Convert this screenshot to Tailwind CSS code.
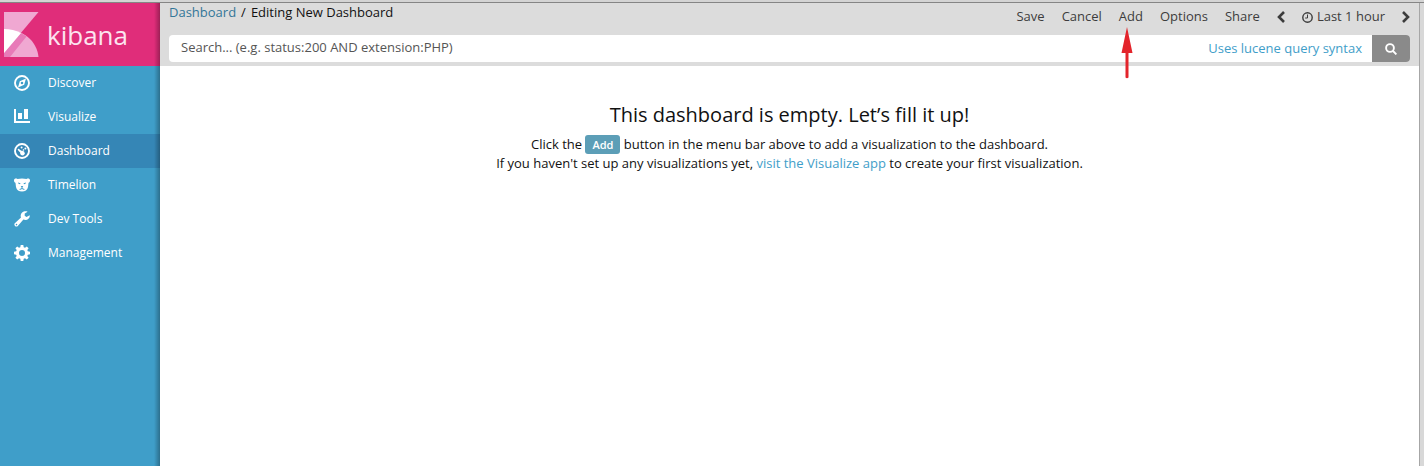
<!DOCTYPE html>
<html lang="en">
<head>
<meta charset="utf-8">
<meta name="viewport" content="width=device-width, initial-scale=1">
<title>Kibana - Editing New Dashboard</title>
<script src="https://cdn.jsdelivr.net/npm/@tailwindcss/browser@4"></script>
</head>
<body class="min-h-screen flex flex-col bg-white font-['Open_Sans',sans-serif] text-[13px] text-[#111]">
<div class="h-[3px] shrink-0 bg-[#d4d4d4] border-b border-[#858585]"></div>
<div class="flex grow">
  <aside class="relative w-[160px] shrink-0 bg-[#3f9ec9] text-xs font-medium text-white">
    <a href="#" aria-label="kibana home" class="flex h-[63px] items-center bg-[#e02d7a] pl-1">
      <svg class="h-[45px] w-[35px] shrink-0" viewBox="0 0 35 45" aria-hidden="true">
        <path fill="#f0a8d2" d="M0 0H34.500L0 41Z"/>
        <path fill="#f0a8d2" d="M0 17C19 17 33 29 34.500 45H0Z"/>
        <path fill="#e87ab8" d="M0 45V41L17 21L22.500 24.500L6 45Z"/>
        <path fill="#fff" d="M0 17C6 17 12 18.500 17 21L0 41Z"/>
      </svg>
      <span class="pl-2 text-[26px] leading-8 text-[#fce4f0]">kibana</span>
    </a>
    <nav aria-label="Main">
      <a href="#" class="flex h-[34px] items-center gap-[18px] pl-3.5">
        <svg class="size-4" viewBox="0 0 16 16" aria-hidden="true"><circle cx="8" cy="8" r="7" fill="none" stroke="#fff" stroke-width="1.900"/><path fill="#fff" fill-rule="evenodd" d="M12 3.500L10.200 9.800L4 12.500L5.800 6.200ZM8 6.700A1.300 1.300 0 1 0 8 9.300A1.300 1.300 0 1 0 8 6.700Z"/></svg>
        <span>Discover</span>
      </a>
      <a href="#" class="flex h-[34px] items-center gap-[18px] pl-3.5">
        <svg class="size-4" viewBox="0 0 16 16" aria-hidden="true"><path fill="#fff" d="M0 0H2V12H16V14H0ZM4 4H8V10H4ZM10 0H14V10H10Z"/></svg>
        <span>Visualize</span>
      </a>
      <a href="#" aria-current="page" class="flex h-[34px] items-center gap-[18px] bg-[#3586b6] pl-3.5">
        <svg class="size-4" viewBox="0 0 16 16" aria-hidden="true"><circle cx="8" cy="8" r="7" fill="none" stroke="#fff" stroke-width="1.900"/><g fill="#fff"><circle cx="4.600" cy="6.600" r=".9"/><circle cx="7.600" cy="4.500" r="1"/><circle cx="11.400" cy="5.600" r="1"/><circle cx="8.500" cy="10.300" r="2.200"/><path d="M4.200 7.500L5.200 6.500L9.500 8.700L8 11.500ZM9.500 6L10.500 7L9 8L8.500 7Z"/></g></svg>
        <span>Dashboard</span>
      </a>
      <a href="#" class="flex h-[34px] items-center gap-[18px] pl-3.5">
        <svg class="size-4" viewBox="0 0 16 16" aria-hidden="true"><path fill="#fff" d="M0 3.500C0 1.500 2 1 3.500 2C6 1.300 10 1.300 12.500 2C14 1 16 1.500 16 3.500C16 5 15 5.500 14.500 6L14 10C13.500 13 11 14.500 8 14.500S2.500 13 2 10L1.500 6C1 5.500 0 5 0 3.500Z"/><g fill="#3f9ec9"><path d="M4 5.500L6.500 6.200L6 7.200L4.500 6.800ZM12 5.500L9.500 6.200L10 7.200L11.500 6.800ZM6.700 9H9.300L8.500 10.300V11.300L10.500 12V12.800H9.500L8 12L6.500 12.800H5.500V12L7.500 11.300V10.300Z"/></g></svg>
        <span>Timelion</span>
      </a>
      <a href="#" class="flex h-[34px] items-center gap-[18px] pl-3.5">
        <svg class="size-4" viewBox="0 0 16 16" aria-hidden="true"><path fill="#fff" fill-rule="evenodd" d="M13.600 .7L10.700 2.500V4.800L12.500 5.900L15.700 4.200C16.300 6.600 14 9 11.500 9C10.700 9 10 8.800 9.400 8.500L3.800 14.900C2.100 16.600-.7 14.100 .8 12.300L7 6.600C5.500 2.800 9.500-.8 13.600 .7ZM2.500 12.800A.8.8 0 1 0 2.500 14.400A.8.8 0 1 0 2.500 12.800Z"/></svg>
        <span>Dev Tools</span>
      </a>
      <a href="#" class="flex h-[34px] items-center gap-[18px] pl-3.5">
        <svg class="size-4" viewBox="0 0 16 16" aria-hidden="true"><path fill="#fff" fill-rule="evenodd" d="M6.700 0H9.300L9.700 2.200L11 2.700L12.800 1.400L14.600 3.200L13.300 5L13.800 6.300L16 6.700V9.300L13.800 9.700L13.300 11L14.600 12.800L12.800 14.600L11 13.300L9.700 13.800L9.300 16H6.700L6.300 13.800L5 13.300L3.200 14.600L1.400 12.800L2.700 11L2.200 9.700L0 9.300V6.700L2.200 6.300L2.700 5L1.400 3.200L3.200 1.400L5 2.700L6.300 2.200ZM8 5A3 3 0 1 0 8 11A3 3 0 1 0 8 5Z"/></svg>
        <span>Management</span>
      </a>
    </nav>
    <div class="pointer-events-none absolute inset-y-0 right-0 w-[6px] bg-linear-to-r from-black/0 to-black/30"></div>
  </aside>
  <div class="flex min-w-0 grow flex-col">
    <header class="bg-[#dcdcdc] pb-1 pl-[9px] pr-[9px]">
      <div class="flex h-8 items-start justify-between">
        <nav aria-label="Breadcrumb" class="flex gap-[5px] leading-[18px]">
          <a href="#" class="text-[#337698]">Dashboard</a><span>/</span><span>Editing New Dashboard</span>
        </nav>
        <div class="flex h-[28px] items-center gap-[17px] text-[#3c3c3c]">
          <button type="button">Save</button>
          <button type="button">Cancel</button>
          <button type="button" class="relative">Add
            <svg class="absolute left-1/2 top-[20px] h-[52px] w-[12px] -translate-x-[10px]" viewBox="0 0 12 52" aria-hidden="true"><path fill="#e3242b" d="M6 0L11.500 26H7.500V50.500Q6 52 4.500 50.500V26H.5Z"/></svg>
          </button>
          <button type="button">Options</button>
          <button type="button">Share</button>
          <button type="button" aria-label="Previous period"><svg class="h-3 w-2" viewBox="0 0 8 12" fill="none" stroke="#3c3c3c" stroke-width="2.600" aria-hidden="true"><path d="M7 1L2 6L7 11"/></svg></button>
          <button type="button" class="flex items-center gap-1">
            <svg class="size-[11px]" viewBox="0 0 11 11" fill="none" stroke="#3c3c3c" aria-hidden="true"><circle cx="5.500" cy="5.500" r="4.700" stroke-width="1.400"/><path d="M5.500 2.500V6H3.200"/></svg>
            <span>Last 1 hour</span></button>
          <button type="button" aria-label="Next period"><svg class="h-3 w-2" viewBox="0 0 8 12" fill="none" stroke="#3c3c3c" stroke-width="2.600" aria-hidden="true"><path d="M1 1L6 6L1 11"/></svg></button>
        </div>
      </div>
      <form class="flex h-[27px] overflow-hidden rounded bg-white">
        <input type="text" aria-label="Search query" placeholder="Search... (e.g. status:200 AND extension:PHP)" class="min-w-0 grow px-3 pb-0.5 placeholder:text-[#555] outline-none">
        <a href="#" class="px-2.5 leading-[27px] text-[#3f9ec9]">Uses lucene query syntax</a>
        <button type="button" aria-label="Search" class="flex w-[38px] items-center justify-center bg-[#8a8a8a]">
          <svg class="size-3" viewBox="0 0 12 12" fill="none" stroke="#fff" stroke-width="1.900" aria-hidden="true"><circle cx="5" cy="5" r="3.900"/><path d="M8 8L11.400 11.400"/></svg>
        </button>
      </form>
    </header>
    <main class="pt-[34px] text-center leading-[19px]">
      <h1 class="pb-1.5 text-xl leading-[29px]">This dashboard is empty. Let’s fill it up!</h1>
      <p>Click the <span class="inline-block rounded-[3px] bg-[#5c9eb7] px-[7px] text-[11px] font-semibold text-white">Add</span> button in the menu bar above to add a visualization to the dashboard.</p>
      <p>If you haven't set up any visualizations yet, <a href="#" class="text-[#3f9ec9]">visit the Visualize app</a> to create your first visualization.</p>
    </main>
  </div>
  <div class="w-[5px] shrink-0 border-l border-[#a6a6a6] bg-[#d8d8d8]"></div>
</div>
</body>
</html>
